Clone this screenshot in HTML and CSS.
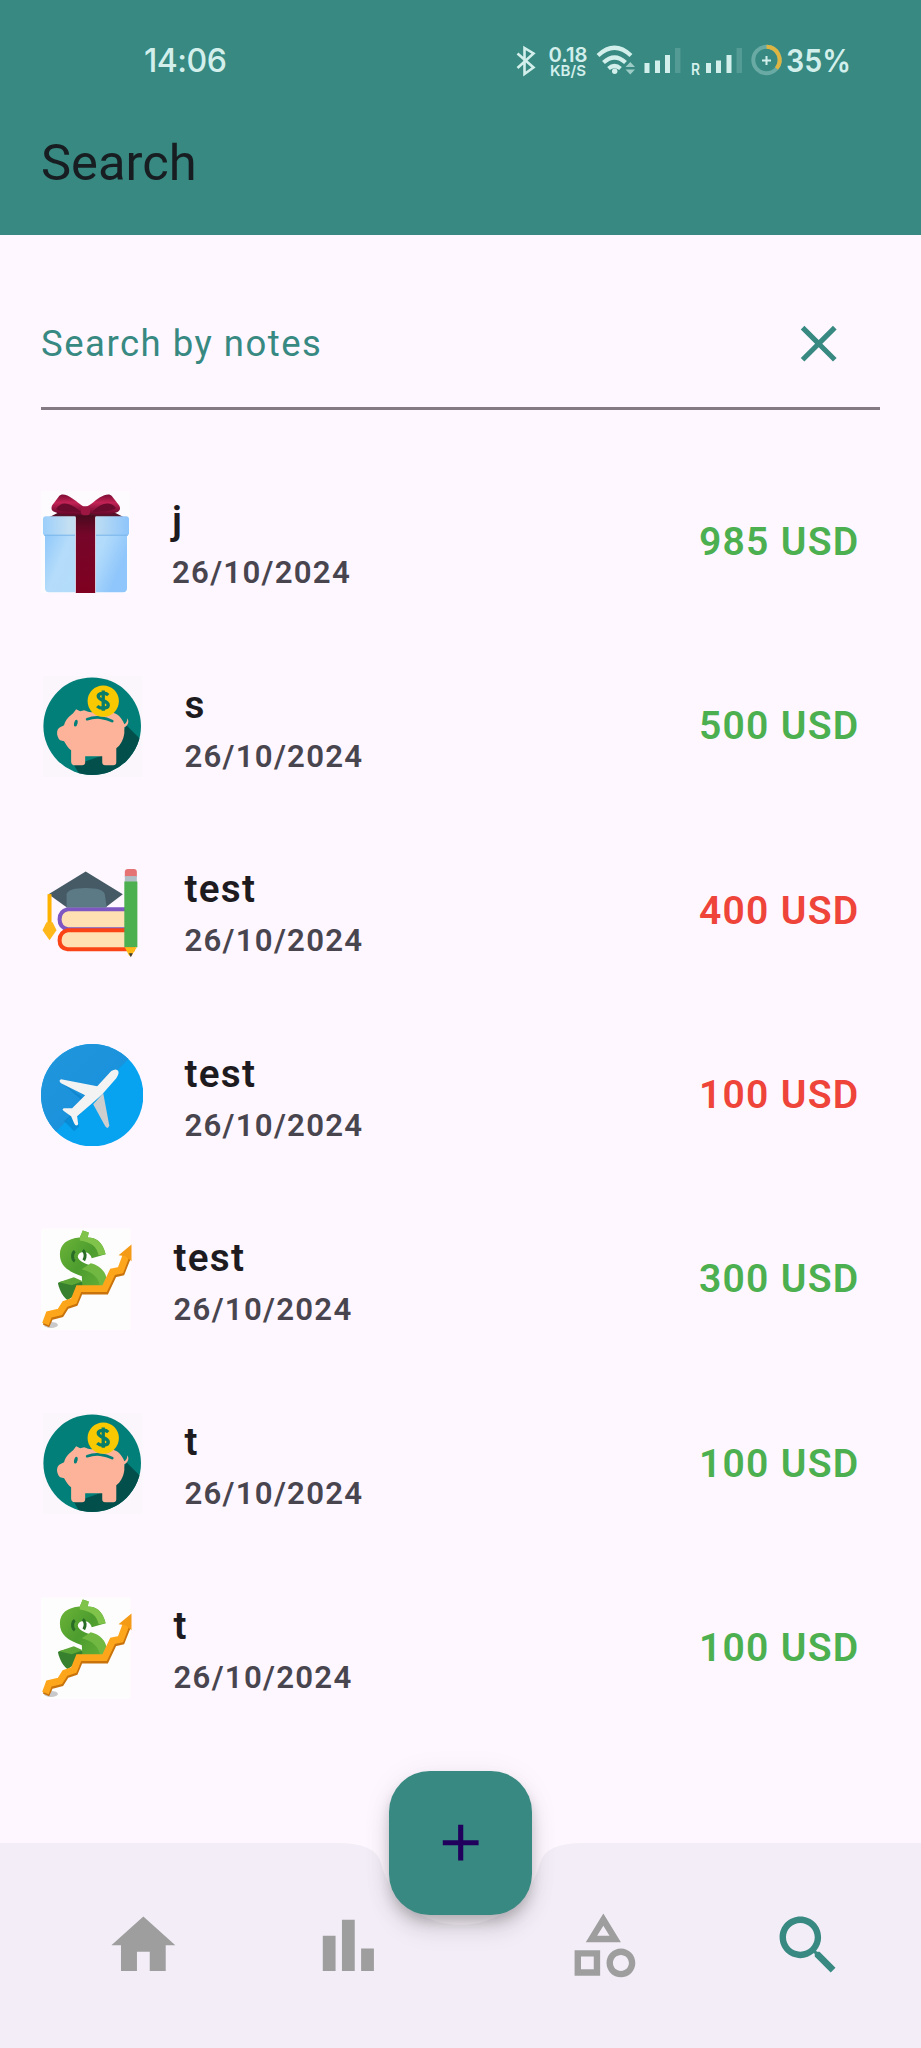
FILE: index.html
```html
<!DOCTYPE html>
<html lang="en">
<head>
<meta charset="utf-8">
<title>Search</title>
<link rel="stylesheet" href="styles.css">
</head>
<body>
<svg class="defs" width="0" height="0">
  <defs>
    <linearGradient id="box" x1="0" x2="1" y1="0" y2=".3"><stop offset="0" stop-color="#8fc8fb"/><stop offset=".3" stop-color="#b5dcfa"/><stop offset=".7" stop-color="#b2dbfb"/><stop offset="1" stop-color="#8fc6fb"/></linearGradient>
    <linearGradient id="lid" x1="0" x2="1"><stop offset="0" stop-color="#9ccffb"/><stop offset=".3" stop-color="#c3dff2"/><stop offset=".65" stop-color="#b9dbf4"/><stop offset="1" stop-color="#8ec5fb"/></linearGradient>
    <linearGradient id="ribbon" x1="0" x2="0" y1="0" y2="1"><stop offset="0" stop-color="#4a0a1e"/><stop offset=".25" stop-color="#75062a"/><stop offset="1" stop-color="#7f0020"/></linearGradient>
    <linearGradient id="bow" x1="0" x2="0" y1="0" y2="1"><stop offset="0" stop-color="#7b0d33"/><stop offset=".4" stop-color="#c22355"/><stop offset="1" stop-color="#65062a"/></linearGradient>
    <linearGradient id="skyDark" x1="0" x2="1" y1="0" y2="1"><stop offset="0" stop-color="#2196dc"/><stop offset="1" stop-color="#158edb"/></linearGradient>
    <linearGradient id="green" x1="0" x2="1" y1="0" y2="1"><stop offset="0" stop-color="#71b83a"/><stop offset=".5" stop-color="#4c9c2e"/><stop offset="1" stop-color="#67b138"/></linearGradient>
    <clipPath id="pigClip"><circle cx="51" cy="51" r="48.6"/></clipPath>
    <clipPath id="skyClip"><circle cx="51" cy="51" r="51"/></clipPath>
    <symbol id="pig" viewBox="0 0 102 102">
      <rect x="2" y="1" width="99" height="101" fill="#fbf6fb"/>
      <circle cx="51" cy="51" r="48.6" fill="#027f79"/>
      <path clip-path="url(#pigClip)" d="M85 50L102 67V102H40L33 90l40-14z" fill="#034f4c"/>
      <path d="M35 34l4 2 4-1c3 1 5 2 7 2l8-1c8-1 16 1 20 5 2 2 4 5 5 8 2-1 3-3 3-6 2 3 1 7-3 9v6c-1 7-4 12-8 15v14q0 3-3 3h-8q-3 0-3-3v-6H44v6q0 3-3 3h-7q-4 0-4-4V75c-3-2-5-6-7-9l-4-1c-4-4-4-11 0-13l4-2c1-5 5-9 9-12z" fill="#fcb39a"/>
      <path d="M46 44c8-3 18-2 25 2" fill="none" stroke="#027f79" stroke-width="2.7" stroke-linecap="round"/>
      <ellipse cx="34.7" cy="48" rx="1.7" ry="3.5" fill="#027f79" transform="rotate(13 35 48)"/>
      <circle cx="62" cy="26" r="15.6" fill="#f8c900"/>
      <path d="M67 20c-3-3-10-2-10 1 0 5 10 4 10 9 0 4-8 4-11 1M62 15.500v20" fill="none" stroke="#087d69" stroke-width="3.300"/>
    </symbol>
    <symbol id="growth" viewBox="0 0 92 102">
      <rect width="90" height="102" rx="2" fill="#fefdfd"/>
      <ellipse cx="10" cy="97" rx="7" ry="3" fill="#c9c8ca"/>
      <path d="M18 54l16-4 10 5-5 9-12 8c-5-3-8-9-10-17z" fill="#37802d"/>
      <path d="M18 54l15-5 9 4-11 4z" fill="#5ba637"/>
      <path d="M39 9l3-7 6 2-1 5c8 0 15 4 18 17l-14 4C49 22 38 22 37 28c0 5 8 8 16 10 10 4 14 13 13 26H42l-1-16c-14-5-22-10-22-22 0-10 7-16 20-17z" fill="url(#green)"/>
      <path d="M39 9l3-7 6 2-1 5c8 0 15 4 18 17l-7 1c-2-9-7-13-19-15z" fill="#80c34b"/>
      <path d="M50 35c9 2 16 9 16 17v12l-7 1c2-11-3-20-18-24z" fill="#71b843"/>
      <path d="M34 23c-3 2-3 8 0 10M42 22c3 2 3 7 1 10" fill="none" stroke="#286c26" stroke-width="3"/>
      <path d="M5 98L9 89 20 86 25 78 34 75 39 63H65L73 46 81 44 87 29" fill="none" stroke="#c8730c" stroke-width="7"/>
      <path d="M4.500 96L8 86.500 19 84 24 76 33 73 38 60.500H64L72 43.500 80 42 86 26" fill="none" stroke="#fda61c" stroke-width="7"/>
      <path d="M91 16L78 27l7 1 6 5z" fill="#f39a16"/>
    </symbol>
  </defs>
</svg>

<div class="screen">
  <header class="header">
    <div class="status">
      <span class="clock">14:06</span>
      <svg class="indicators" width="380" height="60" viewBox="0 0 380 60">
        <path d="M17.500 23.500l16 14-9 6.500V18l9 5.500-16 14.500" fill="none" stroke="#d3efec" stroke-width="2.600"/>
        <g fill="#d3efec" class="status-text">
          <text x="48.500" y="31.500" font-size="20.500" textLength="39" lengthAdjust="spacingAndGlyphs">0.18</text>
          <text x="50" y="46" font-size="15" textLength="36" lengthAdjust="spacingAndGlyphs">KB/S</text>
          <text x="191" y="44.500" font-size="15.500" textLength="9" lengthAdjust="spacingAndGlyphs">R</text>
          <text x="286" y="42" font-size="31.500" textLength="65" lengthAdjust="spacingAndGlyphs">35%</text>
        </g>
        <g fill="none" stroke="#d3efec" stroke-width="4.200">
          <path d="M98 25.500q16.500-15.500 33 0M103.500 32.500q11-10 22 0M108.500 38.500q6-5 12 0"/>
        </g>
        <circle cx="114.700" cy="41.200" r="2.700" fill="#d3efec"/>
        <path d="M125.500 37h9.500l-4.700-5zM125.500 39.500h9.500l-4.700 5z" fill="#9dcbc6"/>
        <g fill="#d3efec">
          <path d="M144.500 33h5v10h-5zM155 30.500h5v12.500h-5zM165 25h5v18h-5zM206 33h5v10h-5zM216 30.500h5v12.500h-5zM226.500 25h5v18h-5z"/>
          <path d="M175 18h5.500v25H175zM236.500 18h5.500v25h-5.500z" opacity=".18"/>
        </g>
        <circle cx="266.500" cy="30" r="13.200" fill="none" stroke="#69aaa4" stroke-width="4"/>
        <path d="M266.500 16.800A13.200 13.200 0 0 1 276.500 38.500" fill="none" stroke="#deb443" stroke-width="4"/>
        <path d="M262 30.500h9M266.500 26v9" stroke="#d3efec" stroke-width="2"/>
      </svg>
    </div>
    <h1 class="title">Search</h1>
  </header>

  <main>
    <div class="field">
      <span class="hint">Search by notes</span>
      <svg class="clear" viewBox="0 0 24 24"><path d="M19 6.410L17.590 5 12 10.590 6.410 5 5 6.410 10.590 12 5 17.590 6.410 19 12 13.410 17.590 19 19 17.590 13.410 12z"/></svg>
    </div>

    <ul class="list">
      <li class="row">
        <svg class="pic gift" viewBox="0 0 90 102">
          <rect width="89" height="102" fill="#fefbfe"/>
          <g transform="translate(0 1)">
            <path d="M4 41h82v55q0 4-4 4H8q-4 0-4-4z" fill="url(#box)"/>
            <path d="M8 25l10-5h55l10 5z" fill="#571129"/>
            <path d="M2 27q0-3 3-3h80q3 0 3 3v14q0 2-3 2H5q-3 0-3-2z" fill="url(#lid)"/>
            <path d="M3 43h84" stroke="#78b4ea"/>
            <path d="M34.500 23h20v78h-20z" fill="url(#ribbon)"/>
            <path d="M34.500 25v76M54.500 25v76" stroke="#d4c8da"/>
            <path d="M42 22c-9 1-22 1-30-3-2-1-2-5 0-7l6-8c2-3 8-2 13 2 5 3 10 8 13 9 4-1 9-6 15-10 5-3 10-4 12-1l7 9c2 3 1 6-2 7-8 3-19 3-27 1z" fill="url(#bow)"/>
            <path d="M15 17c5-9 15-7 25 3-9-1-18 1-25-3zM75 16c-6-8-16-5-24 4 9-1 17 0 24-4z" fill="#6a0a2c"/>
            <rect x="40" y="14" width="9" height="9" rx="3" fill="#9d1742"/>
          </g>
        </svg>
        <div class="info"><span class="name">j</span><span class="date">26/10/2024</span></div>
        <span class="amount">985 USD</span>
      </li>
      <li class="row">
        <svg class="pic"><use href="#pig"/></svg>
        <div class="info"><span class="name">s</span><span class="date">26/10/2024</span></div>
        <span class="amount">500 USD</span>
      </li>
      <li class="row">
        <svg class="pic" viewBox="0 0 102 102">
          <g transform="translate(-.5 -7)">
            <path d="M94 56H27q-8 2-8 10t8 10h67" fill="#ffe0b2" stroke="#7e57c2" stroke-width="4"/>
            <path d="M94 77H27q-8 2-8 10t8 9h67" fill="#ffe0b2" stroke="#fb4416" stroke-width="4"/>
            <path d="M45 18.500L82 41 65 54H26L8 41z" fill="#455a64"/>
            <path d="M26 54V41q2-6 19-6t19 6l2 13z" fill="#5c7a86"/>
            <path d="M9 41v31" stroke="#ffb300" stroke-width="4"/>
            <path d="M6 69h6l4 8-7 10-7-10z" fill="#ffb71a"/>
            <path d="M84 24V19q0-3 3-3h6q3 0 3 3v5z" fill="#e57373"/>
            <path d="M84 23h12v6H84z" fill="#b0bec5"/>
            <path d="M83.500 28.500h13V94h-13z" fill="#4caf50"/>
            <path d="M84 94h12l-5 8q-1 2-3 0z" fill="#ffb916"/>
            <path d="M88 100h4l-2 4z" fill="#3d3d36"/>
          </g>
        </svg>
        <div class="info"><span class="name">test</span><span class="date">26/10/2024</span></div>
        <span class="amount spent">400 USD</span>
      </li>
      <li class="row">
        <svg class="pic" viewBox="0 0 102 102">
          <g clip-path="url(#skyClip)">
            <path d="M0 0h102v102H0z" fill="#07a3f0"/>
            <path d="M0 0h102L0 102z" fill="url(#skyDark)"/>
            <path d="M20 38l30 21-15 15 3 8-5 5-10-10 20-19z" fill="#087cc3" opacity=".55"/>
          </g>
          <path d="M52 60l10-11 6 32q-1 5-4 1z" fill="#cecece"/>
          <path d="M20 35l36 7 14-15q5-3 7 0 1 3-2 7L61 50 51 59 36 72l1 8q-2 3-4-1l-3-7-7-5q-3-2 0-3h8l13-13-24-12q-3-3 0-4z" fill="#f3f3f3"/>
        </svg>
        <div class="info"><span class="name">test</span><span class="date">26/10/2024</span></div>
        <span class="amount spent">100 USD</span>
      </li>
      <li class="row">
        <svg class="pic narrow"><use href="#growth"/></svg>
        <div class="info"><span class="name">test</span><span class="date">26/10/2024</span></div>
        <span class="amount">300 USD</span>
      </li>
      <li class="row">
        <svg class="pic"><use href="#pig"/></svg>
        <div class="info"><span class="name">t</span><span class="date">26/10/2024</span></div>
        <span class="amount">100 USD</span>
      </li>
      <li class="row">
        <svg class="pic narrow"><use href="#growth"/></svg>
        <div class="info"><span class="name">t</span><span class="date">26/10/2024</span></div>
        <span class="amount">100 USD</span>
      </li>
    </ul>
  </main>

  <nav class="nav">
    <svg class="nav-shape" viewBox="0 0 921 205"><path d="M0 0H337.500Q376 0 381 20A82 82 0 0 0 540 20Q545 0 583.500 0H921V205H0z" fill="#f3edf7"/></svg>
    <button class="fab" aria-label="Add"><svg viewBox="0 0 24 24"><path d="M19 13h-6v6h-2v-6H5v-2h6V5h2v6h6z"/></svg></button>
    <a class="tab"><svg viewBox="0 0 24 24"><path d="M10 20v-6h4v6h5v-8h3L12 3 2 12h3v8z"/></svg></a>
    <a class="tab before-gap"><svg viewBox="0 0 24 24"><path d="M4 9h4v11H4zM16 13h4v7h-4zM10 4h4v16h-4z"/></svg></a>
    <a class="tab"><svg viewBox="0 0 24 24"><path d="M12 2l-5.500 9h11L12 2zm0 3.840L13.930 9h-3.870L12 5.840zM17.500 13c-2.490 0-4.500 2.010-4.500 4.500s2.010 4.500 4.500 4.500 4.500-2.010 4.500-4.500-2.010-4.500-4.500-4.500zm0 7c-1.380 0-2.500-1.120-2.500-2.500s1.120-2.500 2.500-2.500 2.500 1.120 2.500 2.500-1.120 2.500-2.500 2.500zM3 21.500h8v-8H3v8zm2-6h4v4H5v-4z"/></svg></a>
    <a class="tab active"><svg viewBox="0 0 24 24"><path d="M15.500 14h-.79l-.28-.27C15.410 12.590 16 11.110 16 9.500 16 5.910 13.090 3 9.500 3S3 5.910 3 9.500 5.910 16 9.500 16c1.610 0 3.090-.59 4.230-1.570l.27.28v.79l5 4.990L20.490 19l-4.990-5zm-6 0C7.010 14 5 11.990 5 9.500S7.010 5 9.500 5 14 7.010 14 9.500 11.990 14 9.500 14z"/></svg></a>
  </nav>
</div>
</body>
</html>
```
FILE: styles.css
```css
* { box-sizing: border-box; }
body { margin: 0; background: #fef7ff; font-family: Roboto, sans-serif; }
.defs { position: absolute; }
.screen { width: 921px; height: 2048px; display: flex; flex-direction: column; overflow: hidden; }

.header { height: 234.500px; background: #378981; padding-top: 30px; }
.status { height: 60px; display: flex; justify-content: space-between; padding: 0 41px 0 144px; }
.clock { font: 500 32px/61px Inter, sans-serif; letter-spacing: -0.500px; color: #d3efec; }
.indicators { margin-left: -1px; flex: none; }
.status-text { font-family: Inter, sans-serif; font-weight: 600; }
.title { margin: 42px 0 0 41px; font-size: 50.700px; line-height: 62px; font-weight: 400; color: #171d20; }

main { flex: 1; }
.field { margin: 65.500px 41px 0; height: 110px; padding: 0 31px 20px 0; border-bottom: 3px solid #837a84; display: flex; align-items: center; justify-content: space-between; }
.hint { font-size: 36.500px; letter-spacing: 1.500px; color: #378981; }
.clear { width: 61.400px; height: 61.400px; fill: #378981; }

.list { list-style: none; margin: 40px 0 0; padding: 0 61.500px 0 41px; }
.row { height: 184.300px; display: flex; align-items: center; }
.pic { width: 102.400px; height: 102.400px; margin-right: 41px; }
.pic.gift { width: 90px; }
.pic.narrow { width: 91.500px; }
.info { flex: 1; display: flex; flex-direction: column; padding-top: 6px; }
.name { font-size: 38.700px; line-height: 54px; font-weight: 600; letter-spacing: 1.280px; color: #1d1b20; }
.date { font-size: 31.200px; line-height: 49px; font-weight: 600; letter-spacing: 1.280px; color: #49454f; }
.amount { font-size: 39.100px; font-weight: 600; letter-spacing: 1.280px; color: #4caf50; }
.amount.spent { color: #ee443a; }

.nav { position: relative; height: 205px; padding-left: 41px; display: flex; }
.nav-shape { position: absolute; left: 0; top: 0; width: 921px; height: 205px; }
.fab { position: absolute; left: 389px; top: -72px; width: 143px; height: 144px; border: 0; border-radius: 41px; background: #378981; display: flex; align-items: center; justify-content: center; padding: 0; box-shadow: 0 8px 13px -2px rgba(0,0,0,.2), 0 15px 25px rgba(0,0,0,.1), 0 3px 32px rgba(0,0,0,.06); }
.fab svg { width: 61.400px; height: 61.400px; fill: #21005d; }
.tab { position: relative; flex: none; width: 204.600px; height: 205px; display: flex; justify-content: center; align-items: center; fill: #9e9e9e; }
.tab svg { width: 76.700px; height: 76.700px; }
.tab.before-gap { margin-right: 51.200px; }
.tab.active { fill: #378981; }
```
